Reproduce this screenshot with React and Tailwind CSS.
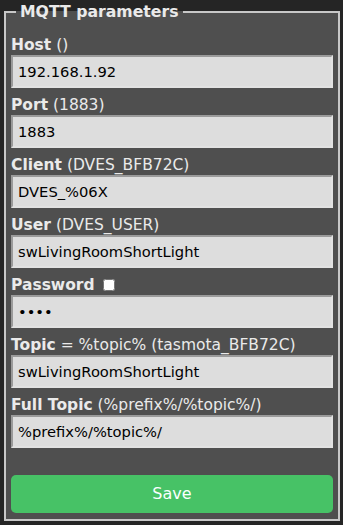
import { useState } from "react";

const fields = [
  { name: "Host", hint: " ()", value: "192.168.1.92", type: "text" },
  { name: "Port", hint: " (1883)", value: "1883", type: "text" },
  { name: "Client", hint: " (DVES_BFB72C)", value: "DVES_%06X", type: "text" },
  { name: "User", hint: " (DVES_USER)", value: "swLivingRoomShortLight", type: "text" },
  { name: "Password", hint: "", value: "1234", type: "password" },
  { name: "Topic", hint: " = %topic% (tasmota_BFB72C)", value: "swLivingRoomShortLight", type: "text" },
  { name: "Full Topic", hint: " (%prefix%/%topic%/)", value: "%prefix%/%topic%/", type: "text" },
];

export default function App() {
  const [values, setValues] = useState(fields.map((f) => f.value));
  const [showPass, setShowPass] = useState(false);

  const update = (i, v) => {
    const next = [...values];
    next[i] = v;
    setValues(next);
  };

  return (
    <div className="min-h-screen bg-[#252525] text-[#eaeaea] font-['DejaVu_Sans',sans-serif]">
      <fieldset className="ml-[4px] w-[336px] border-2 border-[#c8c8c8] bg-[#4f4f4f] px-[5px] pb-[6px]">
        <legend className="ml-[5px] px-[4px] text-[15.7px] font-bold leading-[24px]">
          MQTT parameters
        </legend>
        <div className="pt-[11px]">
          {fields.map((f, i) => (
            <div key={f.name} className="mb-[7px]">
              <div className="flex items-center h-[20px] text-[15.5px] leading-[20px]">
                <b>{f.name}</b>
                <span className="whitespace-pre">{f.hint}</span>
                {f.type === "password" && (
                  <input
                    type="checkbox"
                    checked={showPass}
                    onChange={(e) => setShowPass(e.target.checked)}
                    className="ml-[8px] w-[12px] h-[12px]"
                  />
                )}
              </div>
              <input
                type={f.type === "password" && showPass ? "text" : f.type}
                value={values[i]}
                onChange={(e) => update(i, e.target.value)}
                className="block w-full h-[33px] px-[5px] bg-[#dddddd] text-black text-[14.7px] border-2 border-t-[#9a9a9a] border-l-[#9a9a9a] border-r-[#e2e2e2] border-b-[#e2e2e2] outline-none font-['DejaVu_Sans',sans-serif]"
              />
            </div>
          ))}
          <button className="mt-[20px] w-full h-[38px] rounded-[5px] bg-[#47c266] text-[#faffff] text-[16px]">
            Save
          </button>
        </div>
      </fieldset>
    </div>
  );
}
